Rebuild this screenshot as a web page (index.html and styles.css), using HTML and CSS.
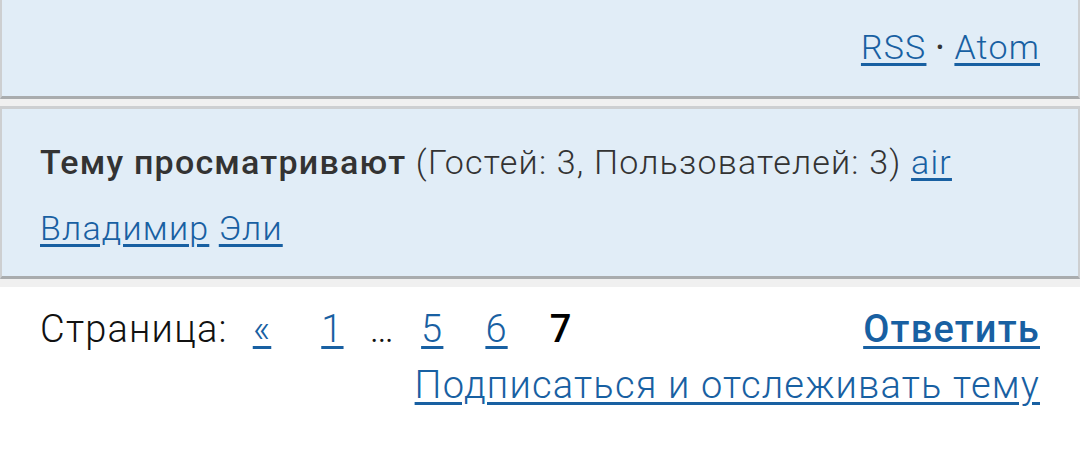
FILE: index.html
```html
<!DOCTYPE html>
<html lang="ru">
  <head>
    <meta charset="utf-8" />
    <title>Тема</title>
    <link rel="stylesheet" href="styles.css">
  </head>

  <body>
    <div class="panels">
      <div class="panel panel-feeds">
        <a href="#">RSS</a> <span class="dot">&bull;</span> <a href="#">Atom</a>
      </div>

      <div class="panel panel-viewers">
        <b>Тему просматривают</b> (Гостей: 3, Пользователей: 3) <a href="#">air</a>
        <a href="#">Владимир</a> <a href="#">Эли</a>
      </div>
    </div>

    <div class="footer-bar">
      <div class="row">
        <div class="pages">
          <span class="label">Страница:</span>
          <a href="#" class="pg pg-prev">&laquo;</a>
          <a href="#" class="pg">1</a>
          <span class="pg">&hellip;</span>
          <a href="#" class="pg pg-wide">5</a>
          <a href="#" class="pg pg-wide">6</a>
          <span class="pg pg-current">7</span>
        </div>
        <a href="#" class="reply">Ответить</a>
      </div>
      <div class="row row-end">
        <a href="#">Подписаться и отслеживать тему</a>
      </div>
    </div>
  </body>
</html>
```

FILE: styles.css
```css
body {
  margin: 0;
  background: #fff;
  font-family: Roboto, "Noto Sans", sans-serif;
  font-weight: 300;
  letter-spacing: 1.2px;
  color: #333;
}
a {
  color: #1860a2;
  text-decoration: underline;
  text-decoration-thickness: 3px;
  text-underline-offset: 4px;
}
.panels {
  background-color: #f0f0f0;
  display: flex;
  flex-direction: column;
  gap: 7px;
  padding-bottom: 8px;
}
.panel {
  background-color: #e1edf7;
  border: 2px solid #cdcfd1;
  border-bottom: 3px solid #a9acae;
  font-size: 34px;
  line-height: 66px;
  padding: 0 38px;
}
.panel-feeds {
  border-top: none;
  text-align: right;
  padding-top: 14px;
  padding-bottom: 16px;
}
.dot {
  color: #333;
  font-size: 24px;
  vertical-align: 4px;
}
.panel-viewers {
  padding-top: 20px;
  padding-bottom: 15px;
  border-top-width: 3px;
}
.panel-viewers b {
  font-weight: 500;
}
.footer-bar {
  padding: 14px 40px 0;
  font-size: 38px;
  color: #111;
}
.row {
  display: flex;
  justify-content: space-between;
  align-items: baseline;
  line-height: 56px;
}
.row-end {
  justify-content: flex-end;
}
.pages {
  display: flex;
  align-items: baseline;
}
.label {
  margin-right: 25px;
}
.pg {
  margin-right: 26px;
}
.pg-prev {
  margin-right: 50px;
}
.pg-wide {
  margin-right: 42px;
}
.pg-current {
  font-weight: 500;
  color: #000;
}
.reply {
  font-weight: 500;
}
```
